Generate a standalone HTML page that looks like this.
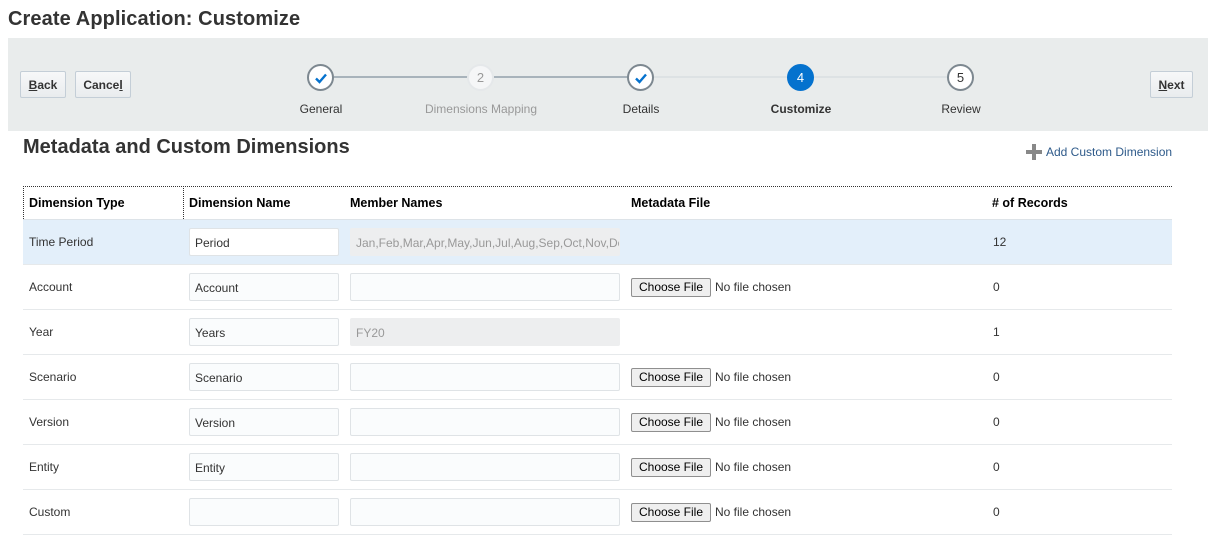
<!DOCTYPE html>
<html><head><style>
*{box-sizing:border-box;margin:0;padding:0}
body{width:1211px;height:537px;background:#fff;font-family:"Liberation Sans",Arial,sans-serif;color:#333;position:relative;overflow:hidden;font-size:12px}
.a{position:absolute}
h1{position:absolute;left:8px;top:8px;font-size:20px;font-weight:bold;color:#333;letter-spacing:0.1px}
.band{left:8px;top:38px;width:1200px;height:93px;background:#e9ecec}
.btn{position:absolute;height:27px;top:71px;border:1px solid #c4ced7;background:linear-gradient(#f7f8f9,#e9ecee);border-radius:2px;font-weight:bold;font-size:12px;color:#333;display:flex;align-items:center;justify-content:center}
.line{position:absolute;top:76px;height:2px;background:#a8b3bb}
.line.l{background:#dde2e4}
.c{position:absolute;top:64px;width:27px;height:27px;border-radius:50%;border:2px solid #7d8890;background:#fff;display:flex;align-items:center;justify-content:center;font-size:13px;color:#333}
.lbl{position:absolute;top:102px;font-size:12px;color:#333;width:160px;text-align:center}
h2{position:absolute;left:23px;top:136px;font-size:20px;font-weight:bold;color:#333}
.th{position:absolute;top:196px;font-weight:bold;font-size:12.5px;color:#000}
.row{position:absolute;left:23px;width:1149px;height:45px;border-bottom:1px solid #e6e9eb}
.row span{position:absolute;top:15px}
.in{position:absolute;top:8px;height:28px;border:1px solid #dfe3e6;background:#fafcfd;border-radius:2px;padding:7px 5px;font-size:12px;color:#333}
.dis{background:#edeeef;border-color:#edeeef;color:#999}
.cf{position:absolute;left:608px;top:13px;width:80px;height:19px;border:1px solid #8f8f8f;background:#efefef;font-size:12px;text-align:center;line-height:17px;border-radius:2px;color:#000}
.nf{position:absolute;left:692px;top:15px;color:#333}
</style></head><body>
<h1>Create Application: Customize</h1>
<div class="a band"></div>
<div class="btn" style="left:20px;width:46px"><u>B</u>ack</div>
<div class="btn" style="left:75px;width:56px">Cance<u>l</u></div>
<div class="btn" style="left:1150px;width:43px;top:71px"><u>N</u>ext</div>
<div class="line" style="left:334px;width:134px"></div>
<div class="line" style="left:494px;width:134px"></div>
<div class="line l" style="left:654px;width:134px"></div>
<div class="line l" style="left:814px;width:134px"></div>
<div class="c" style="left:307px"><svg width="14" height="12" viewBox="0 0 14 12"><path d="M2 6.5L5.5 10L12 2.5" stroke="#0572ce" stroke-width="2.4" fill="none"/></svg></div>
<div class="c" style="left:467px;border-color:#e5e8ea;background:#f5f6f7;color:#999">2</div>
<div class="c" style="left:627px"><svg width="14" height="12" viewBox="0 0 14 12"><path d="M2 6.5L5.5 10L12 2.5" stroke="#0572ce" stroke-width="2.4" fill="none"/></svg></div>
<div class="c" style="left:787px;border-color:#0572ce;background:#0572ce;color:#fff">4</div>
<div class="c" style="left:947px">5</div>
<div class="lbl" style="left:241px">General</div>
<div class="lbl" style="left:401px;color:#999">Dimensions Mapping</div>
<div class="lbl" style="left:561px">Details</div>
<div class="lbl" style="left:721px;font-weight:bold">Customize</div>
<div class="lbl" style="left:881px">Review</div>
<h2>Metadata and Custom Dimensions</h2>
<div class="a" style="left:1026px;top:144px;width:16px;height:16px"><div class="a" style="left:6px;top:0;width:4px;height:16px;background:#888"></div><div class="a" style="left:0;top:6px;width:16px;height:4px;background:#888"></div></div>
<div class="a" style="left:1046px;top:145px;color:#2e5a8a;font-size:12px">Add Custom Dimension</div>
<div class="a" style="left:23px;top:186px;width:1149px;border-top:1px dotted #333"></div>
<div class="a" style="left:23px;top:186px;height:33px;border-left:1px dotted #333"></div>
<div class="a" style="left:183px;top:186px;height:33px;border-left:1px dotted #333"></div>
<div class="a" style="left:23px;top:219px;width:1149px;border-top:1px solid #dde3e8"></div>
<div class="th" style="left:29px">Dimension Type</div>
<div class="th" style="left:189px">Dimension Name</div>
<div class="th" style="left:350px">Member Names</div>
<div class="th" style="left:631px">Metadata File</div>
<div class="th" style="left:992px"># of Records</div>

<div class="row" style="top:220px;background:#e3effa"><span style="left:6px">Time Period</span><div class="in" style="left:166px;width:150px;background:#fff">Period</div><div class="in dis" style="left:327px;width:270px;overflow:hidden;white-space:nowrap">Jan,Feb,Mar,Apr,May,Jun,Jul,Aug,Sep,Oct,Nov,Dec</div><span style="left:970px">12</span></div>
<div class="row" style="top:265px"><span style="left:6px">Account</span><div class="in" style="left:166px;width:150px">Account</div><div class="in" style="left:327px;width:270px"></div><div class="cf">Choose File</div><span class="nf">No file chosen</span><span style="left:970px">0</span></div>
<div class="row" style="top:310px"><span style="left:6px">Year</span><div class="in" style="left:166px;width:150px">Years</div><div class="in dis" style="left:327px;width:270px">FY20</div><span style="left:970px">1</span></div>
<div class="row" style="top:355px"><span style="left:6px">Scenario</span><div class="in" style="left:166px;width:150px">Scenario</div><div class="in" style="left:327px;width:270px"></div><div class="cf">Choose File</div><span class="nf">No file chosen</span><span style="left:970px">0</span></div>
<div class="row" style="top:400px"><span style="left:6px">Version</span><div class="in" style="left:166px;width:150px">Version</div><div class="in" style="left:327px;width:270px"></div><div class="cf">Choose File</div><span class="nf">No file chosen</span><span style="left:970px">0</span></div>
<div class="row" style="top:445px"><span style="left:6px">Entity</span><div class="in" style="left:166px;width:150px">Entity</div><div class="in" style="left:327px;width:270px"></div><div class="cf">Choose File</div><span class="nf">No file chosen</span><span style="left:970px">0</span></div>
<div class="row" style="top:490px"><span style="left:6px">Custom</span><div class="in" style="left:166px;width:150px"></div><div class="in" style="left:327px;width:270px"></div><div class="cf">Choose File</div><span class="nf">No file chosen</span><span style="left:970px">0</span></div>
</body></html>
